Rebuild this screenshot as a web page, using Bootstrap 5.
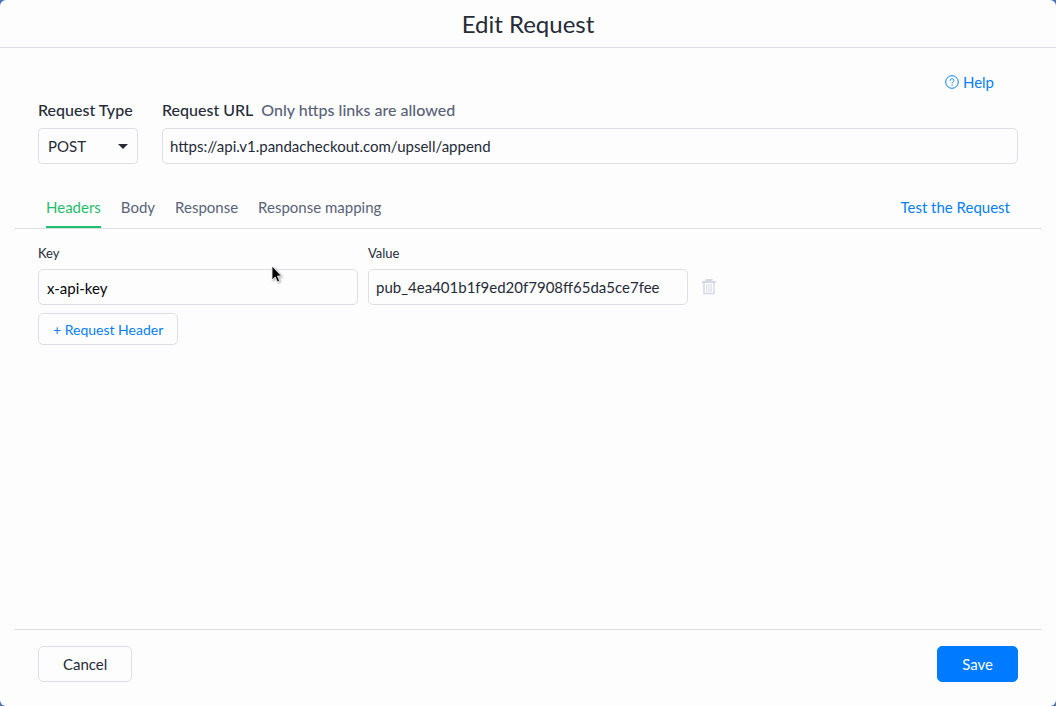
<!DOCTYPE html>
<html lang="en">
<head>
<meta charset="utf-8">
<meta name="viewport" content="width=device-width, initial-scale=1">
<title>Edit Request</title>
<link href="https://cdn.jsdelivr.net/npm/bootstrap@5.3.0/dist/css/bootstrap.min.css" rel="stylesheet">
<style>
  :root { --ink: #252b37; --muted: #596377; --line: #dcdfe7; --blue: #007bff; --azure: #0680f2; --green: #1dbf6b; }
  body { font-family: Lato, "Open Sans", sans-serif; font-size: 15px; line-height: 20px; color: var(--ink); background: #4a72b8; }
  .dialog { background: #fdfdfe; border-radius: 6px; }
  .dialog-head { height: 48px; border-bottom: 1px solid var(--line); }
  .dialog-head h1 { font-size: 24px; line-height: 32px; font-weight: 400; }
  a { color: var(--azure); text-decoration: none; }
  .help-row { padding-top: 24px; }
  .dialog-main { padding: 0 14px; }
  .inset { padding-left: 24px; padding-right: 24px; }
  .field-label { font-size: 16px; font-weight: 500; margin-bottom: 8px; }
  .hint { font-size: 16px; font-weight: 500; color: var(--muted); margin-left: 8px; }
  .form-control, .form-select { height: 36px; font-size: 15px; line-height: 20px; color: var(--ink); background-color: #fdfdfe; border-color: var(--line); border-radius: 5px; padding: 7px; }
  .form-select { width: 100px; padding-left: 9px; border-radius: 4px;
    background-image: url("data:image/svg+xml,%3Csvg xmlns='http://www.w3.org/2000/svg' viewBox='0 0 10 5'%3E%3Cpath d='M0 0h10L5 5z' fill='%23252b37'/%3E%3C/svg%3E");
    background-size: 10px 5px; background-position: right 9px center; }
  .tab-row { margin-top: 24px; border-bottom: 1px solid var(--line); padding: 0 32px; }
  .tab-row .nav { gap: 20px; }
  .tab-row a { display: block; padding: 9px 0; border-bottom: 2px solid transparent; }
  .tab-row .nav a { color: var(--muted); }
  .tab-row .nav a.active { color: var(--green); border-bottom-color: var(--green); }
  .pair { padding-top: 15px; gap: 10px; }
  .pair-field { flex: 0 1 320px; }
  .pair-field label { display: block; font-size: 13px; line-height: 18px; margin-bottom: 7px; }
  .key-box { color: #050609; padding-top: 8px; padding-bottom: 6px; padding-left: 8px; }
  .trash { width: 22px; height: 36px; color: #d5d9e6; }
  .btn { font-size: 15px; line-height: 20px; border-radius: 5px; height: 36px; padding: 0 24px; }
  .btn-line { border-color: var(--line); color: var(--ink); background: #fdfdfe; }
  .btn-add { height: 32px; padding: 1px 14px 0; font-size: 14px; color: var(--azure); margin-top: 8px; }
  .btn-save { background: var(--blue); border-color: var(--blue); color: #fff; }
  .foot { border-top: 1px solid var(--line); padding-top: 16px; padding-bottom: 24px; }
  .pointer { position: absolute; left: 271px; top: 265px; pointer-events: none; filter: drop-shadow(1px 1px 1px rgba(0,0,0,.35)); }
</style>
</head>
<body>
<form class="dialog d-flex flex-column min-vh-100 position-relative">
  <header class="dialog-head d-flex align-items-center justify-content-center">
    <h1 class="m-0">Edit Request</h1>
  </header>
  <main class="dialog-main d-flex flex-column flex-grow-1">
    <div class="help-row inset d-flex justify-content-end">
      <a href="#" class="d-flex align-items-center me-4">
        <svg class="me-1" width="14" height="14" viewBox="0 0 14 14" fill="none" stroke="currentColor" aria-hidden="true"><circle cx="7" cy="7" r="6.3"/><path d="M5.2 5.7c0-1.3.8-2 1.9-2s1.8.7 1.8 1.7c0 1.4-1.8 1.5-1.8 3.1M7.1 9.6v1.1"/></svg>
        Help
      </a>
    </div>
    <div class="inset d-flex gap-4 mt-2">
      <div>
        <label class="field-label d-block" for="type">Request Type</label>
        <select class="form-select" id="type"><option>POST</option><option>GET</option></select>
      </div>
      <div class="flex-grow-1">
        <div class="d-flex"><label class="field-label" for="url">Request URL</label><span class="hint">Only https links are allowed</span></div>
        <input class="form-control" id="url" type="text" value="https://api.v1.pandacheckout.com/upsell/append">
      </div>
    </div>
    <div class="tab-row d-flex justify-content-between">
      <nav class="nav">
        <a href="#" class="active">Headers</a>
        <a href="#">Body</a>
        <a href="#">Response</a>
        <a href="#">Response mapping</a>
      </nav>
      <a href="#">Test the Request</a>
    </div>
    <div class="inset">
      <div class="pair d-flex align-items-end">
        <div class="pair-field"><label for="key">Key</label><input class="form-control key-box" id="key" type="text" value="x-api-key"></div>
        <div class="pair-field"><label for="val">Value</label><input class="form-control" id="val" type="text" value="pub_4ea401b1f9ed20f7908ff65da5ce7fee"></div>
        <button type="button" class="trash d-flex align-items-center justify-content-center border-0 bg-transparent p-0" aria-label="Delete header">
          <svg width="14" height="16" viewBox="0 0 14 16" fill="none" stroke="currentColor" aria-hidden="true"><path d="M0 3h14M4.5 2.5V1h5v1.5" stroke-width="2"/><path d="M2 3v11.5h10V3" stroke-width="1.5"/><path d="M4.8 5v8M7 5v8M9.2 5v8" stroke-width="1"/></svg>
        </button>
      </div>
      <button type="button" class="btn btn-line btn-add">+ Request Header</button>
    </div>
    <footer class="foot inset d-flex justify-content-between mt-auto">
      <button type="button" class="btn btn-line">Cancel</button>
      <button type="submit" class="btn btn-save">Save</button>
    </footer>
  </main>
  <svg class="pointer" width="14" height="20" viewBox="0 0 14 20" aria-hidden="true"><path d="M1 1v14l3.2-3 2.3 5 2.2-1-2.2-5h4z" fill="#000" stroke="#fff" stroke-width=".8"/></svg>
</form>
<script src="https://cdn.jsdelivr.net/npm/bootstrap@5.3.0/dist/js/bootstrap.bundle.min.js"></script>
</body>
</html>
